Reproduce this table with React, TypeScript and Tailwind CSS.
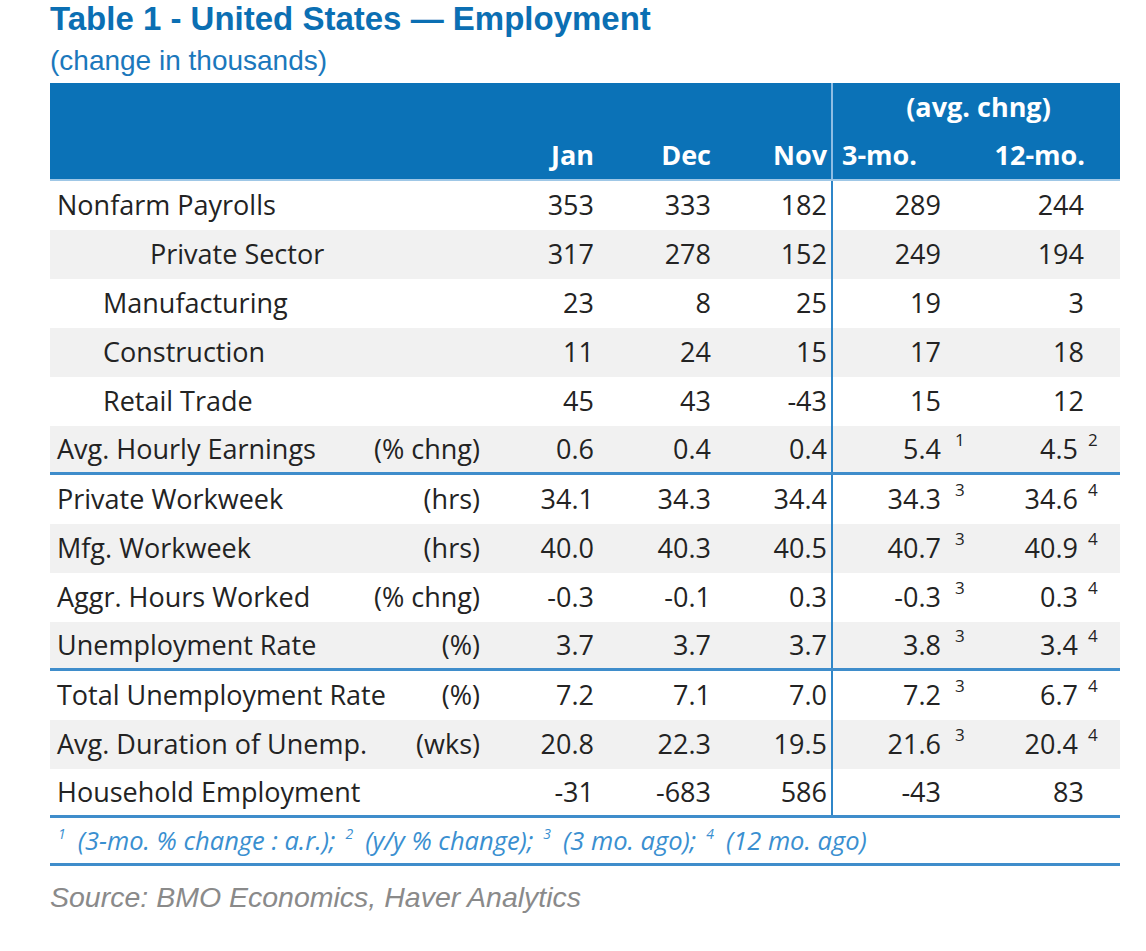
import React from "react";

type Row = {
  label: string;
  indent?: "sub" | "deep";
  unit?: string;
  jan: string;
  dec: string;
  nov: string;
  three: string;
  twelve: string;
  threeSup?: string;
  twelveSup?: string;
  borderBottom?: boolean;
};

const ROWS: Row[] = [
  { label: "Nonfarm Payrolls", jan: "353", dec: "333", nov: "182", three: "289", twelve: "244" },
  { label: "Private Sector", indent: "deep", jan: "317", dec: "278", nov: "152", three: "249", twelve: "194" },
  { label: "Manufacturing", indent: "sub", jan: "23", dec: "8", nov: "25", three: "19", twelve: "3" },
  { label: "Construction", indent: "sub", jan: "11", dec: "24", nov: "15", three: "17", twelve: "18" },
  { label: "Retail Trade", indent: "sub", jan: "45", dec: "43", nov: "-43", three: "15", twelve: "12" },
  {
    label: "Avg. Hourly Earnings",
    unit: "(% chng)",
    jan: "0.6",
    dec: "0.4",
    nov: "0.4",
    three: "5.4",
    threeSup: "1",
    twelve: "4.5",
    twelveSup: "2",
    borderBottom: true,
  },
  { label: "Private Workweek", unit: "(hrs)", jan: "34.1", dec: "34.3", nov: "34.4", three: "34.3", threeSup: "3", twelve: "34.6", twelveSup: "4" },
  { label: "Mfg. Workweek", unit: "(hrs)", jan: "40.0", dec: "40.3", nov: "40.5", three: "40.7", threeSup: "3", twelve: "40.9", twelveSup: "4" },
  { label: "Aggr. Hours Worked", unit: "(% chng)", jan: "-0.3", dec: "-0.1", nov: "0.3", three: "-0.3", threeSup: "3", twelve: "0.3", twelveSup: "4" },
  {
    label: "Unemployment Rate",
    unit: "(%)",
    jan: "3.7",
    dec: "3.7",
    nov: "3.7",
    three: "3.8",
    threeSup: "3",
    twelve: "3.4",
    twelveSup: "4",
    borderBottom: true,
  },
  { label: "Total Unemployment Rate", unit: "(%)", jan: "7.2", dec: "7.1", nov: "7.0", three: "7.2", threeSup: "3", twelve: "6.7", twelveSup: "4" },
  { label: "Avg. Duration of Unemp.", unit: "(wks)", jan: "20.8", dec: "22.3", nov: "19.5", three: "21.6", threeSup: "3", twelve: "20.4", twelveSup: "4" },
  {
    label: "Household Employment",
    jan: "-31",
    dec: "-683",
    nov: "586",
    three: "-43",
    twelve: "83",
    borderBottom: true,
  },
];

function Sup({ children, wide }: { children: string; wide?: boolean }) {
  return (
    <span className={`absolute top-[2px] left-full text-[17px] leading-none ${wide ? "ml-[14px]" : "ml-[10px]"}`}>
      {children}
    </span>
  );
}

function FootSup({ children, first }: { children: string; first?: boolean }) {
  return (
    <span className={`relative -top-[7px] mr-[12px] text-[14px] ${first ? "" : "ml-[10px]"}`}>{children}</span>
  );
}

function DataRow({ row, index }: { row: Row; index: number }) {
  const shaded = index % 2 === 1;
  const labelPad = row.indent === "deep" ? "pl-[100px]" : row.indent === "sub" ? "pl-[53px]" : "pl-[7px]";

  return (
    <div
      className={`flex h-[49px] items-center ${shaded ? "bg-[#f1f1f1]" : "bg-white"} ${
        row.borderBottom ? "border-b-[3px] border-[#3f8dcb]" : ""
      }`}>
      <div className={`flex w-[440px] items-center justify-between pr-[10px] ${labelPad}`}>
        <span>{row.label}</span>
        {row.unit && <span>{row.unit}</span>}
      </div>
      <div className="w-[110px] pr-[6px] text-right">{row.jan}</div>
      <div className="w-[117px] pr-[6px] text-right">{row.dec}</div>
      <div className="w-[114px] pr-[4px] text-right">{row.nov}</div>
      <div className="flex h-full w-[130px] items-center justify-end border-l-2 border-[#2f86c8] pr-[20px]">
        <span className="relative">
          {row.three}
          {row.threeSup && <Sup wide>{row.threeSup}</Sup>}
        </span>
      </div>
      <div className={`flex w-[159px] items-center justify-end ${row.twelveSup ? "pr-[42px]" : "pr-[36px]"}`}>
        <span className="relative">
          {row.twelve}
          {row.twelveSup && <Sup>{row.twelveSup}</Sup>}
        </span>
      </div>
    </div>
  );
}

export default function App() {
  return (
    <div className="min-h-[951px] w-[1146px] bg-white pl-[50px]">
      <h1 className="font-['Liberation_Sans',Arial,sans-serif] text-[33px] leading-[38px] font-bold text-[#0b6fb3]">
        Table 1 - United States — Employment
      </h1>
      <p className="mt-[7px] font-['Liberation_Sans',Arial,sans-serif] text-[28px] leading-[32px] text-[#1b78bc]">
        (change in thousands)
      </p>

      <div className="mt-[6px] w-[1070px] font-['Open_Sans','DejaVu_Sans',sans-serif] text-[27px] text-[#232323]">
        <div className="flex h-[98px] border-b-2 border-[#9fc7e6] bg-[#0b72b7] font-bold text-white">
          <div className="w-[440px]" />
          <div className="flex w-[110px] items-end justify-end pr-[6px] pb-[8px] leading-[32px]">Jan</div>
          <div className="flex w-[117px] items-end justify-end pr-[6px] pb-[8px] leading-[32px]">Dec</div>
          <div className="flex w-[114px] items-end justify-end pr-[4px] pb-[8px] leading-[32px]">Nov</div>
          <div className="flex w-[289px] flex-col border-l-2 border-[#8fbde3]">
            <div className="flex h-[48px] items-center justify-center pl-[4px]">(avg. chng)</div>
            <div className="flex h-[48px]">
              <div className="flex w-[128px] items-center justify-end pr-[44px]">3-mo.</div>
              <div className="flex w-[159px] items-center justify-end pr-[35px]">12-mo.</div>
            </div>
          </div>
        </div>

        {ROWS.map((row, i) => (
          <DataRow key={row.label} row={row} index={i} />
        ))}

        <div className="flex h-[48px] items-center border-b-[3px] border-[#3f8dcb] pl-[8px] text-[25.5px] text-[#3a8fd0] italic">
          <FootSup first>1</FootSup>
          <span>(3-mo. % change : a.r.);</span>
          <FootSup>2</FootSup>
          <span>(y/y % change);</span>
          <FootSup>3</FootSup>
          <span>(3 mo. ago);</span>
          <FootSup>4</FootSup>
          <span>(12 mo. ago)</span>
        </div>
      </div>

      <p className="mt-[15px] font-['Liberation_Sans',Arial,sans-serif] text-[28.5px] leading-[32px] text-[#8a8a8a] italic">
        Source: BMO Economics, Haver Analytics
      </p>
    </div>
  );
}
